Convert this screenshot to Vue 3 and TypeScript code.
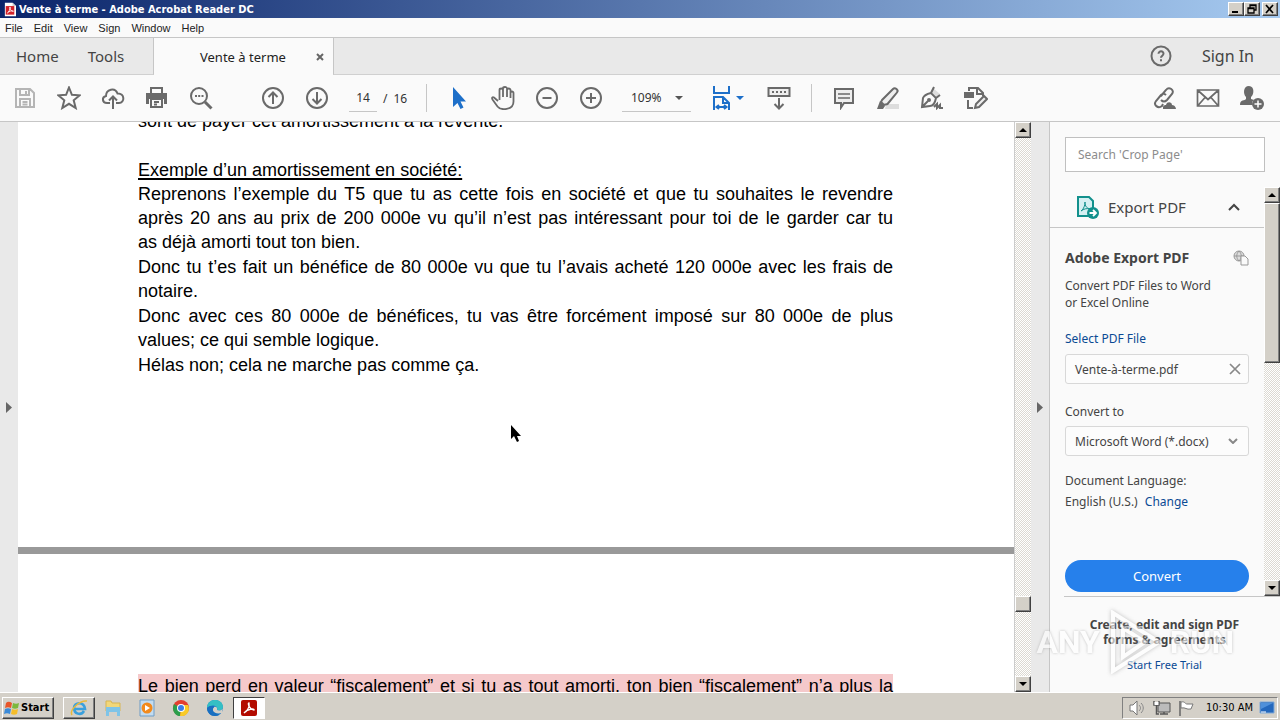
<script setup lang="ts">
import { ref } from 'vue'

interface Line { text: string; full?: boolean }
interface Paragraph { lines: Line[]; heading?: boolean }

const menus: string[] = ['File', 'Edit', 'View', 'Sign', 'Window', 'Help']
const page = ref('14')
const zoom = ref('109%')
const search = ref('')
const format = ref('Microsoft Word (*.docx)')

const paragraphs: Paragraph[] = [
  { heading: true, lines: [{ text: 'Exemple d’un amortissement en société:' }] },
  {
    lines: [
      { text: 'Reprenons l’exemple du T5 que tu as cette fois en société et que tu souhaites le revendre', full: true },
      { text: 'après 20 ans au prix de 200 000e vu qu’il n’est pas intéressant pour toi de le garder car tu', full: true },
      { text: 'as déjà amorti tout ton bien.' },
    ],
  },
  {
    lines: [
      { text: 'Donc tu t’es fait un bénéfice de 80 000e vu que tu l’avais acheté 120 000e avec les frais de', full: true },
      { text: 'notaire.' },
    ],
  },
  {
    lines: [
      { text: 'Donc avec ces 80 000e de bénéfices, tu vas être forcément imposé sur 80 000e de plus', full: true },
      { text: 'values; ce qui semble logique.' },
    ],
  },
  { lines: [{ text: 'Hélas non; cela ne marche pas comme ça.' }] },
]
</script>

<template>
  <div class="window">
    <header class="titlebar">
      <svg class="app-icon" viewBox="0 0 14 16"><path d="M1 0h9l4 4v12H1z" fill="#fff" /><path d="M10 0v4h4" fill="#ccc" /><rect x="2" y="4" width="10" height="10" fill="#d3222a" /><path d="M4 12c2-1 3-4 3-7 0 4 2 5 4 5-3-1-5 0-7 2" fill="none" stroke="#fff" /></svg>
      <h1>Vente à terme - Adobe Acrobat Reader DC</h1>
      <div class="win-buttons">
        <button class="raised" aria-label="Minimize"><svg viewBox="0 0 12 10"><path d="M2 8h6" stroke="#000" stroke-width="2" /></svg></button>
        <button class="raised" aria-label="Restore"><svg viewBox="0 0 12 10"><path d="M4 4V1h6v5H8M4 1.5h6M2 4h6v5H2zM2 4.5h6" fill="none" stroke="#000" stroke-width="1.3" /></svg></button>
        <button class="raised close" aria-label="Close"><svg viewBox="0 0 12 10"><path d="M2 1l7 8M9 1L2 9" stroke="#000" stroke-width="1.7" /></svg></button>
      </div>
    </header>

    <nav class="menubar">
      <button v-for="m in menus" :key="m">{{ m }}</button>
    </nav>

    <div class="tabs">
      <div class="fixed-tabs"><button>Home</button><button>Tools</button></div>
      <div class="doc-tab">
        <span>Vente à terme</span>
        <button aria-label="Close tab"><svg viewBox="0 0 8 8"><path d="M1 1l6 6M7 1L1 7" stroke="#666" stroke-width="2" /></svg></button>
      </div>
      <div class="tabs-rest">
        <button class="help" aria-label="Help"><svg viewBox="0 0 22 22"><circle cx="11" cy="11" r="9.5" /><path d="M8.5 8.8c0-3.4 5.2-3.2 5 0-.1 2-2.5 1.900-2.500 4M11 14.200v2" /></svg></button>
        <button class="signin">Sign In</button>
      </div>
    </div>

    <div class="toolbar">
      <div class="group">
        <button class="tool" aria-label="Save"><svg viewBox="0 0 24 24" class="pale"><path d="M3 3h14l4 4v14H3zM7 3v6h9V3M13 5v3M7 21v-8h10v8M9.500 16h5M9.500 18.500h5" /></svg></button>
        <button class="tool" aria-label="Star"><svg viewBox="0 0 24 24"><path d="M12 1.500l2.900 7.300 7.800.5-6 5 2 7.700-6.700-4.200L5.300 22l2-7.700-6-5 7.800-.5z" /></svg></button>
        <button class="tool" aria-label="Upload"><svg viewBox="0 0 24 24"><path d="M9 17H6C1 17 .5 11 5 10 5 3 14 1 16.500 7.500 24 7 24 17 18 17h-3M12 23V11M8 14.500l4-4 4 4" /></svg></button>
        <button class="tool" aria-label="Print"><svg viewBox="0 0 24 24"><path d="M6 8V2h11v6" /><path d="M1 7h21v11h-3v-5H4v5H1z" fill="#6a6a6a" stroke="none" /><path d="M6 13h11v8H6zM9 16h5M9 18.500h3" /></svg></button>
        <button class="tool" aria-label="Find"><svg viewBox="0 0 24 24"><circle cx="10" cy="10" r="8" /><path d="M16 16l6.500 6.500" stroke-width="3" /><path d="M6 10h2M9.200 10h2M12.500 10h2" /></svg></button>
      </div>
      <div class="group">
        <button class="tool" aria-label="Previous page"><svg viewBox="0 0 24 24"><circle cx="12" cy="12" r="10" /><path d="M12 18V6.500M7.500 11L12 6.500l4.500 4.500" /></svg></button>
        <button class="tool" aria-label="Next page"><svg viewBox="0 0 24 24"><circle cx="12" cy="12" r="10" /><path d="M12 6v11.500M7.500 13l4.500 4.500 4.500-4.500" /></svg></button>
      </div>
      <div class="pages"><input v-model="page" aria-label="Page number"><span>/</span><span>16</span></div>
      <div class="rule"></div>
      <div class="group">
        <button class="tool" aria-label="Select"><svg viewBox="0 0 24 24"><path d="M6 1v20l4.500-4 3 6 3-1.500-3-6H19z" fill="#1d6fc9" stroke="none" /></svg></button>
        <button class="tool" aria-label="Pan"><svg viewBox="0 0 24 24"><path d="M7 15L3 11.500c-1.500-1-2.500.5-1.500 2l5 7c3 4 16 4 16-5V7c0-2-3-2-3 0v5M19.500 12V4c0-2-3.500-2-3.500 0v7M16 11V2.500c0-2-4-2-4 0V11M12 11V4c0-2-3.500-2-3.500 0v10" stroke-width="1.800" /></svg></button>
        <button class="tool" aria-label="Zoom out"><svg viewBox="0 0 24 24"><circle cx="12" cy="12" r="10" /><path d="M7.500 12h9" /></svg></button>
        <button class="tool" aria-label="Zoom in"><svg viewBox="0 0 24 24"><circle cx="12" cy="12" r="10" /><path d="M7 12h10M12 7v10" /></svg></button>
      </div>
      <label class="zoom">
        <select v-model="zoom" aria-label="Zoom level"><option>109%</option></select>
        <svg viewBox="0 0 8 4"><path d="M0 0h8L4 4z" fill="#555" /></svg>
      </label>
      <button class="fit" aria-label="Fit width">
        <svg class="fit-icon" viewBox="0 0 20 24"><path d="M2 0v7h15V0M2 24V11h9l6 6v7M11 11v6h6M5 21h9M7 19l-2.500 2L7 23M12 19l2.500 2-2.500 2" /></svg>
        <svg class="fit-caret" viewBox="0 0 8 4"><path d="M0 0h8L4 4z" fill="#1d6fc9" /></svg>
      </button>
      <button class="tool keyboard" aria-label="Reading mode"><svg viewBox="0 0 24 24"><path d="M1.500 2h21v8h-21z" fill="#eee" /><path d="M5 6h14" stroke-dasharray="2 2" /><path d="M12 12v10M7.500 18l4.500 4.500 4.500-4.500" /></svg></button>
      <div class="rule second"></div>
      <div class="group">
        <button class="tool" aria-label="Comment"><svg viewBox="0 0 24 24"><path d="M3 3h18v14h-9l-3 4.500V17H3z" fill="#eee" /><path d="M6 8h12M6 12h12" stroke-width="1.500" /></svg></button>
        <button class="tool" aria-label="Highlight"><svg viewBox="0 0 24 24"><path d="M10 18h13v5H9z" fill="#ddd" stroke="none" /><path d="M6 14L17 3c2-2 6 1 4 3.500L11.500 18 8 19l-3-3z" fill="#eee" /><path d="M4 15l5 5-2 3H1z" fill="#6a6a6a" stroke="none" /></svg></button>
        <button class="tool" aria-label="Sign"><svg viewBox="0 0 24 24"><path d="M13 2l7 6-2 4-7-6z" fill="#ddd" stroke="none" /><path d="M2 21l1-9c1-3 4-4 8-5l5 5c-1 5-3 8-6 8zM11 7l3-6M16 12l4-3M2 21l6-6M14 21l3-3v4l3-3v3h3" stroke-width="2" /><circle cx="9" cy="14" r="1" /></svg></button>
        <button class="tool" aria-label="Fill and edit"><svg viewBox="0 0 24 24"><path d="M5 5V2h9l5 5v3M13 2v6h6M4 14v8h5" /><path d="M0 6h10v6H0z" fill="#6a6a6a" stroke="none" /><path d="M11 22l1-4 8-8 3 3-8 8z" fill="#eee" /></svg></button>
      </div>
      <div class="group share">
        <button class="tool" aria-label="Share link"><svg viewBox="0 0 24 24"><path d="M9 10l5-6c3-4 9 0 6 4l-5 6c-2 2-4 2-6 0M14 9c-2-2-4-1-5 0l-5 6c-3 4 2 8 6 5l1-2" /><path d="M11 22c0-3 2-3 3-3 1-4 6-3 6 0 3 0 4 3 4 4H11z" fill="#6a6a6a" stroke="none" /></svg></button>
        <button class="tool" aria-label="Mail"><svg viewBox="0 0 24 24"><path d="M1.500 4h21v16h-21zM2 4.500l10 9 10-9M2 19.500l7-8M22 19.500l-7-8" stroke-width="1.700" /></svg></button>
        <button class="tool" aria-label="Add person"><svg viewBox="0 0 24 24"><path d="M9 0c6 0 5 9 2 11v2l3 1c-3 2-2 4-1 5H0c0-6 5-4 6-6v-2C3 8 3 0 9 0z" fill="#6a6a6a" stroke="none" /><circle cx="18" cy="18" r="6" fill="#6a6a6a" stroke="none" /><path d="M18 14.500v7M14.500 18h7" stroke="#fff" stroke-width="1.500" /></svg></button>
      </div>
    </div>

    <main class="workspace">
      <button class="strip left" aria-label="Show navigation"><svg viewBox="0 0 6 11"><path d="M0 0l6 5.500L0 11z" fill="#666" /></svg></button>
      <section class="document">
        <article class="sheet first">
          <p class="line cut">sont de payer cet amortissement à la revente.</p>
          <div v-for="(p, i) in paragraphs" :key="i" class="para">
            <p v-for="l in p.lines" :key="l.text" class="line" :class="{ full: l.full, heading: p.heading }">{{ l.text }}</p>
          </div>
        </article>
        <article class="sheet next">
          <p class="line full marked">Le bien perd en valeur “fiscalement” et si tu as tout amorti, ton bien “fiscalement” n’a plus la</p>
        </article>
        <svg class="pointer" viewBox="0 0 10 17"><path d="M0 0v14l3-3 3 6 2-1-2-5h4z" /></svg>
      </section>
      <div class="scroll doc-scroll">
        <button class="raised" aria-label="Scroll up"><svg viewBox="0 0 8 4"><path d="M0 4h8L4 0z" /></svg></button>
        <i class="before"></i><i class="raised thumb"></i><i class="after"></i>
        <button class="raised" aria-label="Scroll down"><svg viewBox="0 0 8 4"><path d="M0 0h8L4 4z" /></svg></button>
      </div>
      <button class="strip" aria-label="Hide tools"><svg viewBox="0 0 6 11"><path d="M0 0l6 5.500L0 11z" fill="#666" /></svg></button>

      <aside class="panel">
        <input v-model="search" class="search" type="text" placeholder="Search 'Crop Page'" aria-label="Search tools">
        <div class="panel-mid">
          <div class="export">
            <button class="export-head">
              <svg class="export-icon" viewBox="0 0 23 24"><path d="M2 2h11l4 4v15H2z" fill="#d5f0f2" stroke="#12908c" stroke-width="2" /><path d="M5 16c3-2 4-6 4-9 0 5 2 6 5 7-4-1-6 0-9 2" fill="none" stroke="#12908c" /><circle cx="17" cy="18" r="6" fill="#12908c" /><path d="M13.500 18h6M17 15l3 3-3 3" fill="none" stroke="#fff" stroke-width="1.800" /></svg>
              <span>Export PDF</span>
              <svg class="up" viewBox="0 0 12 8"><path d="M1 7l5-5 5 5" fill="none" stroke="#444" stroke-width="2" /></svg>
            </button>
            <div class="export-body">
              <div class="title-row">
                <h2>Adobe Export PDF</h2>
                <svg viewBox="0 0 16 16"><circle cx="6" cy="6" r="5" fill="#ddd" stroke="#999" /><path d="M1 6h10M6 1c-3 3-3 7 0 10M6 1c3 3 3 7 0 10" fill="none" stroke="#999" /><path d="M8 6h4l3 3v6H8z" fill="#fafafa" stroke="#999" /></svg>
              </div>
              <p class="desc">Convert PDF Files to Word<br>or Excel Online</p>
              <a href="#" class="select-file">Select PDF File</a>
              <div class="box file"><span>Vente-à-terme.pdf</span><button aria-label="Remove file"><svg viewBox="0 0 12 12"><path d="M1 1l10 10M11 1L1 11" stroke="#888" stroke-width="1.700" /></svg></button></div>
              <label class="to" for="format">Convert to</label>
              <div class="combo">
                <select id="format" v-model="format" class="box"><option>Microsoft Word (*.docx)</option></select>
                <svg viewBox="0 0 10 6"><path d="M1 1l4 4 4-4" fill="none" stroke="#888" stroke-width="2" /></svg>
              </div>
              <p class="lang">Document Language:<br>English (U.S.) <a href="#">Change</a></p>
              <button class="convert">Convert</button>
            </div>
          </div>
          <div class="scroll side-scroll">
            <button class="raised" aria-label="Scroll up"><svg viewBox="0 0 8 4"><path d="M0 4h8L4 0z" /></svg></button>
            <i class="raised thumb"></i><i class="after"></i>
            <button class="raised" aria-label="Scroll down"><svg viewBox="0 0 8 4"><path d="M0 0h8L4 4z" /></svg></button>
          </div>
        </div>
        <footer class="promo">
          <p>Create, edit and sign PDF<br>forms &amp; agreements</p>
          <a href="#">Start Free Trial</a>
        </footer>
      </aside>
    </main>

    <footer class="taskbar">
      <button class="raised start"><svg viewBox="0 0 16 16"><path d="M2 3c2-2 4-1 6 0L7 8C5 7 3 7 1 8z" fill="#e8562a" /><path d="M9 3c2 1 4 1 6 0l-1 5c-2 1-4 1-6 0z" fill="#7cb83c" /><path d="M1 9c2-1 4-1 6 0l-1 5c-2-1-4-1-6 0z" fill="#3b8ad8" /><path d="M8 9c2 1 4 1 6 0l-1 5c-2 1-4 1-6 0z" fill="#f5bd29" /></svg>Start</button>
      <button class="task raised" aria-label="Internet Explorer"><svg viewBox="0 0 18 18"><path d="M14 12c-3 5-10 3-10-3s10-7 11 1H5" fill="none" stroke="#3aa0dd" stroke-width="2.600" /><path d="M2 16C-1 11 10 1 17 2" fill="none" stroke="#e9b93a" stroke-width="1.500" /></svg></button>
      <button class="task" aria-label="Explorer"><svg viewBox="0 0 18 18"><path d="M2 2h5l1 2h8v8H2z" fill="#f2d77a" stroke="#d7b552" /><path d="M2 8h14v9h-3v-4H5v4H2z" fill="#7fc4e8" /></svg></button>
      <button class="task" aria-label="Media player"><svg viewBox="0 0 18 18"><path d="M2 1h14v16H2z" fill="#c3dcf0" stroke="#6f9dc6" /><circle cx="9" cy="9" r="5.500" fill="#f28a1c" /><path d="M7 6l5 3-5 3z" fill="#fff" /></svg></button>
      <button class="task" aria-label="Chrome"><svg viewBox="0 0 18 18"><circle cx="9" cy="9" r="8" fill="#e33e30" /><path d="M9 9L2 5c-3 6 1 12 6 12z" fill="#2c9e4b" /><path d="M9 9l-1 8c6 1 11-5 8-11H9z" fill="#f9cb28" /><circle cx="9" cy="9" r="4" fill="#fff" /><circle cx="9" cy="9" r="3" fill="#3b7de9" /></svg></button>
      <button class="task" aria-label="Edge"><svg viewBox="0 0 18 18"><circle cx="9" cy="9" r="8" fill="#1673c4" /><path d="M1 9C1-2 17-1 17 8c0 3-3 4-6 3 2-4-5-7-10-2" fill="#35bfc4" /><path d="M17 8c0 3-3 4-6 3 1-2-1-4-3-3-3 3 0 8 8 6" fill="#d4d0c8" /><path d="M1 9c3-3 6-2 7-1-3 3-1 7 5 8C7 19 1 15 1 9" fill="#1a6fc0" /></svg></button>
      <button class="task active" aria-label="Acrobat"><svg viewBox="0 0 18 18"><rect x="1" y="1" width="16" height="16" rx="2" fill="#b30b00" /><path d="M4 14c3-1 6-7 5-10-2 0 1 7 5 7 1-2-7-1-10 3" fill="none" stroke="#fff" stroke-width="1.300" /></svg></button>
      <div class="tray">
        <svg viewBox="0 0 18 16"><path d="M1 5h3l4-4v14l-4-4H1z" fill="#fff" stroke="#777" /><path d="M10 5c2 2 2 4 0 6M12 3c3 3 3 7 0 10" fill="none" stroke="#888" /></svg>
        <svg viewBox="0 0 18 16"><path d="M5 3h12v9H5z" fill="#bbb" stroke="#555" /><path d="M7 14h8M11 12v2M1 1v4h5V1M3.500 5v9H6" fill="none" stroke="#555" stroke-width="1.500" /><path d="M1.500 2h4v3h-4z" fill="#fff" /></svg>
        <svg viewBox="0 0 18 16"><path d="M3 1v15" stroke="#666" stroke-width="1.500" /><path d="M4 2c4-1 4 2 6 2h6l-2 5c-5 1-5-2-10-1z" fill="#fff" stroke="#777" /></svg>
        <time>10:30 AM</time>
        <svg class="desk" viewBox="0 0 16 14"><path d="M1 1h14v11H1z" fill="#2468bd" stroke="#7fa9d8" /><path d="M2 2h12L2 8z" fill="#4f90da" /><path d="M2 11h5" stroke="#fff" /></svg>
      </div>
    </footer>

    <div class="watermark" aria-hidden="true">
      <span>ANY</span>
      <svg viewBox="0 0 54 64"><path d="M5 3l46 29L5 61zM15 18l22 14-22 15z" /></svg>
      <span>RUN</span>
    </div>
  </div>
</template>

<style>
html, body { margin: 0; background: #fafafa; }
</style>

<style scoped>
* { box-sizing: border-box; }
.window { position: relative; height: 100vh; display: flex; flex-direction: column; overflow: hidden; background: #fafafa; color: #444; font-family: "Noto Sans", "Open Sans", sans-serif; font-size: 12px; }
button { border: 0; padding: 0; margin: 0; background: none; font: inherit; color: inherit; }
input, select { font: inherit; color: inherit; margin: 0; }
p, h1, h2 { margin: 0; }
a { color: #0a4a94; text-decoration: none; }
svg { display: block; flex: none; }
.raised { background: #d4d0c8; border: 1px solid; border-color: #fff #404040 #404040 #fff; box-shadow: inset -1px -1px #808080; }

.titlebar { flex: none; height: 18px; display: flex; align-items: center; padding: 0 2px 0 4px; background: linear-gradient(90deg, #0a246a, #a6caf0); color: #fff; }
.app-icon { width: 12px; height: 15px; }
h1 { flex: 1; margin-left: 3px; font: bold 11px "DejaVu Sans Condensed", "DejaVu Sans", sans-serif; }
.win-buttons { display: flex; }
.win-buttons button { width: 16px; height: 14px; display: grid; place-items: center; }
.win-buttons svg { width: 12px; height: 10px; }
.win-buttons .close { margin-left: 2px; }

.menubar { flex: none; height: 20px; display: flex; align-items: center; gap: 11px; padding: 0 5px; border-bottom: 1px solid #c6c6c6; color: #222; font: 11px "Liberation Sans", Tahoma, sans-serif; }

.tabs { flex: none; height: 37px; display: flex; background: #e9e9e9; font-size: 15px; }
.fixed-tabs { width: 154px; display: flex; gap: 29px; padding-left: 16px; border-right: 1px solid #c6c6c6; border-bottom: 1px solid #d0d0d0; }
.doc-tab { width: 179px; display: flex; align-items: center; padding: 0 9px 0 46px; justify-content: space-between; background: #fafafa; color: #222; font-size: 13px; }
.doc-tab svg { width: 8px; height: 8px; }
.tabs-rest { flex: 1; display: flex; justify-content: flex-end; align-items: center; gap: 30px; padding-right: 26px; border-left: 1px solid #c6c6c6; border-bottom: 1px solid #d0d0d0; }
.signin { font-size: 16px; }
.help svg { width: 22px; height: 22px; fill: none; stroke: #6a6a6a; stroke-width: 2; }

.toolbar { flex: none; height: 47px; display: flex; align-items: center; padding: 0 6px 0 3px; border-bottom: 1px solid #c6c6c6; }
.group { display: flex; margin-right: 28px; }
.tool { width: 44px; height: 44px; display: grid; place-items: center; }
.tool svg { width: 24px; height: 24px; fill: none; stroke: #6a6a6a; stroke-width: 2; }
.tool svg.pale { stroke: #b5b5b5; }
.group:nth-child(2) { margin-right: 10px; }
.pages { display: flex; align-items: center; gap: 6px; width: 77px; color: #333; }
.pages input { width: 28px; height: 28px; padding: 0; text-align: center; border: 0; border-bottom: 1px solid #c6c6c6; background: none; }
.rule { width: 1px; height: 28px; background: #c6c6c6; margin-right: 10px; }
.rule + .group { margin-right: 9px; }
.zoom { position: relative; width: 69px; }
.zoom select { appearance: none; width: 100%; height: 28px; border: 0; border-bottom: 1px solid #c6c6c6; background: none; padding: 0 9px; color: #333; border-radius: 0; }
.zoom svg { position: absolute; right: 8px; top: 12px; width: 8px; height: 4px; }
.fit { display: flex; align-items: center; gap: 4px; margin-left: 21px; }
.fit-icon { width: 20px; height: 24px; fill: none; stroke: #1d6fc9; stroke-width: 2; }
.fit-caret { width: 8px; height: 4px; }
.keyboard { margin-left: 13px; }
.rule.second { margin: 0 10px; }
.share { margin: 0 0 0 auto; }

.workspace { flex: 1; min-height: 0; display: flex; }
.strip { flex: none; width: 18px; display: grid; place-items: center; background: #e9e9e9; }
.strip svg { width: 6px; height: 11px; }
.document { position: relative; flex: 1; min-width: 0; overflow: hidden; background: #fff; color: #000; font-family: "Liberation Sans", Arial, sans-serif; font-size: 18px; line-height: 24px; }
.sheet { padding: 0 121px 0 120px; }
.first { padding-bottom: 170px; border-bottom: 7px solid #999; }
.cut { margin: -13px 0 25px; }
.para:nth-child(n + 4) { margin-top: 1px; }
.line { white-space: nowrap; }
.full { text-align: justify; text-align-last: justify; white-space: normal; }
.heading { text-decoration: underline; text-decoration-thickness: 2px; text-underline-offset: 2px; text-decoration-skip-ink: none; }
.next { padding-top: 120px; }
.marked { background: #f5c9cb; }
.pointer { position: absolute; left: 493px; top: 303px; width: 10px; height: 17px; }

.scroll { flex: none; display: flex; flex-direction: column; background: repeating-conic-gradient(#fff 0 25%, #dcd9d2 0 50%) 0 0 / 2px 2px; }
.scroll button { width: 100%; height: 16px; display: grid; place-items: center; }
.scroll svg { width: 8px; height: 4px; }
.scroll .thumb { height: 16px; }
.doc-scroll { width: 17px; border-left: 1px solid #ccc; }
.doc-scroll .before { flex: 458; }
.doc-scroll .after { flex: 64; }
.side-scroll { width: 16px; }
.side-scroll .thumb { flex: 159; }
.side-scroll .after { flex: 218; }

.panel { flex: none; width: 231px; display: flex; flex-direction: column; border-left: 1px solid #c6c6c6; }
.search { height: 35px; margin: 15px; padding: 0 12px; border: 1px solid #c0c0c0; background: #fff; outline: 0; }
.search::placeholder { color: #8c8c8c; opacity: 1; }
.panel-mid { flex: 1; min-height: 0; display: flex; }
.export { flex: 1; display: flex; flex-direction: column; }
.export-head { flex: none; height: 41px; display: flex; align-items: center; padding: 0 24px 0 26px; border-bottom: 1px solid #c6c6c6; font-size: 15px; text-align: left; }
.export-head span { flex: 1; margin-left: 9px; }
.export-icon { width: 23px; height: 24px; }
.up { width: 12px; height: 8px; }
.export-body { flex: 1; display: flex; flex-direction: column; align-items: stretch; padding: 20px 15px 4px; }
.title-row { display: flex; justify-content: space-between; align-items: center; height: 20px; }
h2 { font-size: 14px; line-height: 20px; }
.title-row svg { width: 16px; height: 16px; }
.desc { margin-top: 9px; line-height: 17px; }
.select-file { margin-top: 18px; line-height: 20px; }
.box { width: 100%; height: 30px; border: 1px solid #d8d8d8; border-radius: 3px; background: #fcfcfc; padding: 0 9px; }
.file { display: flex; align-items: center; justify-content: space-between; margin-top: 5px; padding-right: 7px; }
.file svg { width: 12px; height: 12px; }
.to { margin-top: 18px; line-height: 20px; }
.combo { position: relative; margin-top: 4px; }
.combo select { appearance: none; display: block; }
.combo svg { position: absolute; right: 11px; top: 12px; width: 10px; height: 6px; }
.lang { margin-top: 14px; line-height: 21px; }
.lang a { margin-left: 4px; }
.convert { height: 32px; margin-top: auto; border-radius: 16px; background: #2680eb; color: #fff; font-size: 13px; }
.promo { height: 96px; margin-left: 14px; padding: 20px 15px 0 0; border-top: 1px solid #c6c6c6; text-align: center; }
.promo p { font-weight: bold; font-size: 12px; line-height: 15px; }
.promo a { display: block; margin-top: 8px; font-size: 11px; line-height: 20px; }

.taskbar { flex: none; height: 28px; display: flex; align-items: center; padding: 2px 2px 0; background: #d4d0c8; border-top: 1px solid #fff; color: #000; font-family: "DejaVu Sans Condensed", "DejaVu Sans", sans-serif; font-size: 11px; }
.start { display: flex; align-items: center; gap: 1px; width: 52px; height: 22px; padding-left: 1px; margin-right: 9px; font-weight: bold; }
.start svg { width: 16px; height: 16px; }
.task { width: 32px; height: 22px; display: grid; place-items: center; margin-right: 2px; }
.task svg { width: 18px; height: 18px; }
.task.active { background: #fff; border: 1px solid; border-color: #404040 #fff #fff #404040; }
.tray { display: flex; align-items: center; gap: 6px; height: 22px; margin-left: auto; padding: 0 2px 0 6px; border: 1px solid; border-color: #808080 #fff #fff #808080; }
.tray svg { width: 18px; height: 16px; }
.tray time { margin-left: 5px; white-space: nowrap; }
.tray .desk { width: 16px; height: 14px; }

.watermark { position: absolute; right: 46px; bottom: 46px; height: 64px; display: flex; align-items: center; gap: 8px; pointer-events: none; opacity: .6; color: #fff; font: bold 32px Roboto, "Liberation Sans", sans-serif; text-shadow: 0 0 3px #999; }
.watermark svg { width: 54px; height: 64px; fill: none; stroke: #fff; stroke-width: 4; filter: drop-shadow(0 0 2px #999); }
</style>
